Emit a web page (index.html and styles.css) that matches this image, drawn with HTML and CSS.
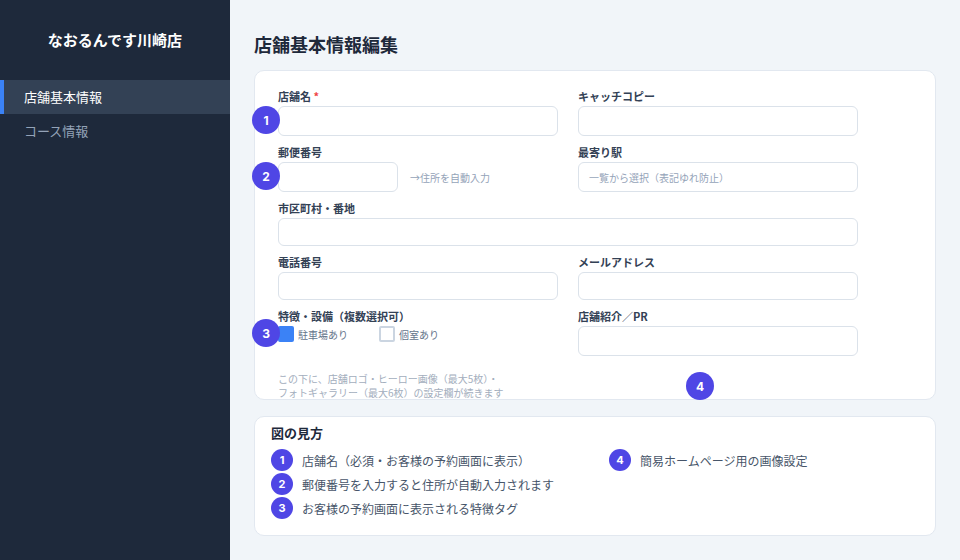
FILE: index.html
```html
<!DOCTYPE html>
<html lang="ja">
<head>
<meta charset="utf-8">
<title>店舗基本情報編集</title>
<link rel="stylesheet" href="styles.css">
</head>
<body>
<aside class="sidebar">
  <div class="brand">なおるんです川崎店</div>
  <nav class="nav">
    <div class="nav-item active">店舗基本情報</div>
    <div class="nav-item">コース情報</div>
  </nav>
</aside>
<main class="main">
  <h1 class="page-title">店舗基本情報編集</h1>
  <section class="card form-card">
    <div class="grid">
      <div class="field">
        <label class="label">店舗名 <span class="req">*</span></label>
        <div class="input h30"></div>
      </div>
      <div class="field">
        <label class="label">キャッチコピー</label>
        <div class="input h30"></div>
      </div>
      <div class="field">
        <label class="label">郵便番号</label>
        <div class="postal-row">
          <div class="input postal h30"></div>
          <span class="hint">→住所を自動入力</span>
        </div>
      </div>
      <div class="field">
        <label class="label">最寄り駅</label>
        <div class="input h30"><span class="placeholder">一覧から選択（表記ゆれ防止）</span></div>
      </div>
      <div class="field full">
        <label class="label">市区町村・番地</label>
        <div class="input"></div>
      </div>
      <div class="field">
        <label class="label">電話番号</label>
        <div class="input"></div>
      </div>
      <div class="field">
        <label class="label">メールアドレス</label>
        <div class="input"></div>
      </div>
      <div class="field">
        <label class="label">特徴・設備（複数選択可）</label>
        <div class="checks">
          <span class="check"><span class="box checked"></span>駐車場あり</span>
          <span class="check"><span class="box"></span>個室あり</span>
        </div>
      </div>
      <div class="field">
        <label class="label">店舗紹介／PR</label>
        <div class="input h30"></div>
      </div>
    </div>
    <p class="note">この下に、店舗ロゴ・ヒーロー画像（最大5枚）・<br>フォトギャラリー（最大6枚）の設定欄が続きます</p>
    <span class="badge b1">1</span>
    <span class="badge b2">2</span>
    <span class="badge b3">3</span>
    <span class="badge b4">4</span>
  </section>
  <section class="card legend-card">
    <div class="legend-title">図の見方</div>
    <div class="legend-grid">
      <div class="legend-col">
        <div class="legend-item"><span class="mini">1</span>店舗名（必須・お客様の予約画面に表示）</div>
        <div class="legend-item"><span class="mini">2</span>郵便番号を入力すると住所が自動入力されます</div>
        <div class="legend-item"><span class="mini">3</span>お客様の予約画面に表示される特徴タグ</div>
      </div>
      <div class="legend-col">
        <div class="legend-item"><span class="mini">4</span>簡易ホームページ用の画像設定</div>
      </div>
    </div>
  </section>
</main>
</body>
</html>
```
FILE: styles.css
```css
* { box-sizing: border-box; }
html, body { margin: 0; padding: 0; }
body {
  width: 960px;
  height: 560px;
  display: flex;
  font-family: "Noto Sans CJK JP", "Noto Sans", sans-serif;
  background: #f1f5f9;
  overflow: hidden;
}
.sidebar {
  width: 230px;
  flex: none;
  background: #1e293b;
  color: #fff;
}
.brand {
  padding: 30px 0;
  text-align: center;
  font-size: 15px;
  font-weight: 700;
  line-height: 20px;
}
.nav-item {
  height: 34px;
  line-height: 34px;
  padding-left: 24px;
  font-size: 13px;
  color: #94a3b8;
}
.nav-item.active {
  background: #334155;
  color: #fff;
  box-shadow: inset 4px 0 0 #3b82f6;
}
.main {
  flex: 1;
  padding: 32px 24px 0 24px;
}
.page-title {
  margin: 0 0 14px 0;
  font-size: 18px;
  line-height: 24px;
  font-weight: 700;
  color: #1e293b;
}
.card {
  background: #fff;
  border: 1px solid #e2e8f0;
  border-radius: 10px;
}
.form-card {
  position: relative;
  height: 330px;
  padding: 18px 23px;
}
.grid {
  display: grid;
  grid-template-columns: 280px 280px;
  column-gap: 20px;
  row-gap: 9px;
}
.field.full { grid-column: 1 / -1; }
.label {
  display: block;
  font-size: 11px;
  line-height: 14px;
  font-weight: 700;
  color: #334155;
  margin-bottom: 3px;
}
.req { color: #ef4444; }
.input {
  height: 28px;
  border: 1px solid #dbe2ea;
  border-radius: 6px;
  background: #fff;
  display: flex;
  align-items: center;
  padding: 0 10px;
}
.input.h30 { height: 30px; }
.input.postal { width: 120px; }
.postal-row {
  display: flex;
  align-items: center;
  gap: 12px;
}
.hint, .placeholder {
  font-size: 10px;
  color: #94a3b8;
}
.checks {
  display: flex;
  gap: 31px;
  height: 16px;
  align-items: center;
}
.check {
  display: flex;
  align-items: center;
  gap: 4px;
  font-size: 10px;
  color: #64748b;
}
.box {
  width: 16px;
  height: 16px;
  border: 2px solid #cbd5e1;
  border-radius: 2px;
  background: #fff;
}
.box.checked {
  background: #3b82f6;
  border-color: #3b82f6;
}
.note {
  margin: 16px 0 0 0;
  font-size: 10px;
  line-height: 14px;
  color: #a3aebd;
}
.badge {
  position: absolute;
  width: 28px;
  height: 28px;
  border-radius: 50%;
  background: #4f46e5;
  color: #fff;
  font-family: Inter, "Noto Sans", sans-serif;
  font-size: 12px;
  font-weight: 700;
  display: flex;
  align-items: center;
  justify-content: center;
}
.b1 { left: -3px; top: 35px; }
.b2 { left: -3px; top: 91px; }
.b3 { left: -3px; top: 248px; }
.b4 { left: 431px; top: 301px; }
.legend-card {
  margin-top: 16px;
  height: 120px;
  padding: 7px 16px;
}
.legend-title {
  font-size: 13px;
  line-height: 18px;
  font-weight: 700;
  color: #1e293b;
  margin-bottom: 7px;
}
.legend-grid {
  display: grid;
  grid-template-columns: 1fr 1fr;
  column-gap: 28px;
}
.legend-col {
  display: flex;
  flex-direction: column;
  gap: 2px;
}
.legend-item {
  display: flex;
  align-items: center;
  gap: 9px;
  height: 22px;
  font-size: 12px;
  color: #475569;
}
.mini {
  width: 22px;
  height: 22px;
  flex: none;
  border-radius: 50%;
  background: #4f46e5;
  color: #fff;
  font-family: Inter, "Noto Sans", sans-serif;
  font-size: 11px;
  font-weight: 700;
  display: flex;
  align-items: center;
  justify-content: center;
}
```
